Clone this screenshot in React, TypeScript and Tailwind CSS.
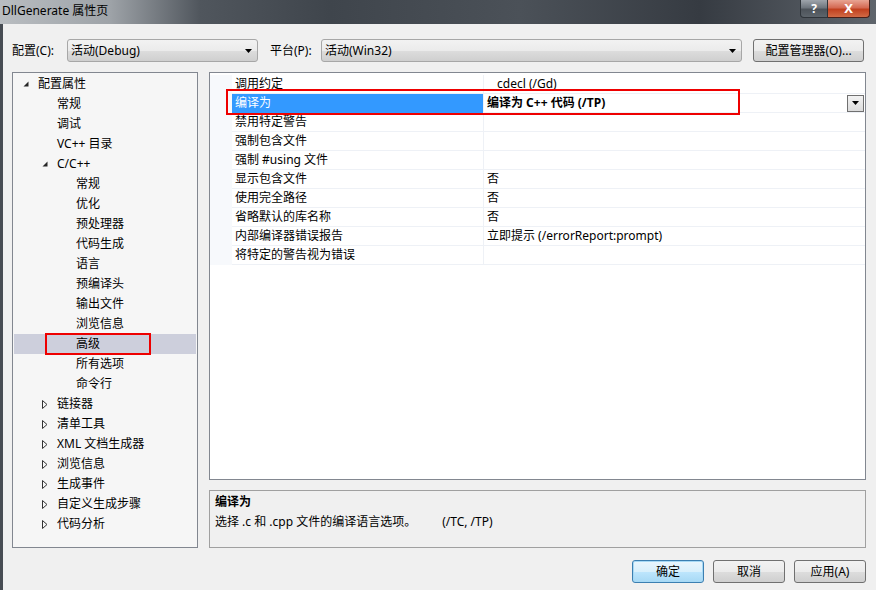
import React from "react";

type TreeNode = {
  label: string;
  level: number;
  arrow?: "open" | "closed";
  selected?: boolean;
};

const tree: TreeNode[] = [
  { label: "配置属性", level: 0, arrow: "open" },
  { label: "常规", level: 1 },
  { label: "调试", level: 1 },
  { label: "VC++ 目录", level: 1 },
  { label: "C/C++", level: 1, arrow: "open" },
  { label: "常规", level: 2 },
  { label: "优化", level: 2 },
  { label: "预处理器", level: 2 },
  { label: "代码生成", level: 2 },
  { label: "语言", level: 2 },
  { label: "预编译头", level: 2 },
  { label: "输出文件", level: 2 },
  { label: "浏览信息", level: 2 },
  { label: "高级", level: 2, selected: true },
  { label: "所有选项", level: 2 },
  { label: "命令行", level: 2 },
  { label: "链接器", level: 1, arrow: "closed" },
  { label: "清单工具", level: 1, arrow: "closed" },
  { label: "XML 文档生成器", level: 1, arrow: "closed" },
  { label: "浏览信息", level: 1, arrow: "closed" },
  { label: "生成事件", level: 1, arrow: "closed" },
  { label: "自定义生成步骤", level: 1, arrow: "closed" },
  { label: "代码分析", level: 1, arrow: "closed" },
];

const indent = ["pl-[9px]", "pl-[28px]", "pl-[47px]"];

const props: { name: string; value: string; indentValue?: boolean }[] = [
  { name: "调用约定", value: "cdecl (/Gd)", indentValue: true },
  { name: "编译为", value: "编译为 C++ 代码 (/TP)" },
  { name: "禁用特定警告", value: "" },
  { name: "强制包含文件", value: "" },
  { name: "强制 #using 文件", value: "" },
  { name: "显示包含文件", value: "否" },
  { name: "使用完全路径", value: "否" },
  { name: "省略默认的库名称", value: "否" },
  { name: "内部编译器错误报告", value: "立即提示 (/errorReport:prompt)" },
  { name: "将特定的警告视为错误", value: "" },
];

function DownTri() {
  return (
    <svg width="7" height="4" viewBox="0 0 7 4">
      <path d="M0 0 H7 L3.5 4 Z" fill="#000" />
    </svg>
  );
}

function TreeArrow({ kind }: { kind?: "open" | "closed" }) {
  if (kind === "open") {
    return (
      <svg width="6" height="6" viewBox="0 0 6 6">
        <path d="M5.5 0.5 V5.5 H0.5 Z" fill="#262626" />
      </svg>
    );
  }
  if (kind === "closed") {
    return (
      <svg width="6" height="9" viewBox="0 0 6 9">
        <path d="M0.5 0.5 L5 4.5 L0.5 8.5 Z" fill="none" stroke="#333" strokeWidth="1" />
      </svg>
    );
  }
  return null;
}

function Combo({ text, className }: { text: string; className: string }) {
  return (
    <div
      className={`${className} h-[23px] flex items-center justify-between pl-[3px] pr-[5px] rounded-[3px] border border-[#a7a7a7] bg-[linear-gradient(#f2f2f2,#ebebeb_50%,#dddddd_51%,#cfcfcf)]`}
    >
      <span>{text}</span>
      <DownTri />
    </div>
  );
}

function WinButton({ label, focused }: { label: string; focused?: boolean }) {
  return (
    <div
      className={`w-[72px] h-[23px] flex items-center justify-center rounded-[3px] border ${
        focused
          ? "border-[#3c7fb1] bg-[linear-gradient(#eaf6fd,#d9f0fc_50%,#bee6fd_51%,#a7d9f5)] shadow-[inset_0_0_0_1px_#a7d9f5]"
          : "border-[#707070] bg-[linear-gradient(#f2f2f2,#ebebeb_50%,#dddddd_51%,#cfcfcf)]"
      }`}
    >
      {label}
    </div>
  );
}

export default function App() {
  return (
    <div className="w-[876px] h-[590px] flex flex-col overflow-hidden font-['Noto_Sans','Noto_Sans_CJK_SC',sans-serif] text-[12px] leading-[16px] text-black">
      {/* Title bar */}
      <div className="h-[24px] flex items-start justify-between bg-[linear-gradient(to_right,#b9bdc1_0px,#9ea3a8_110px,#50565d_200px,#3f454c_330px,#4b5158_520px,#363b42_700px,#5f656c_876px)]">
        <div className="pl-[2px] pt-[3px] text-[12px] leading-[16px] text-black">DllGenerate 属性页</div>
        <div className="flex mr-[6px]">
          <div className="w-[28px] h-[18px] flex items-center justify-center border border-[#2f343a] border-t-0 rounded-bl-[4px] bg-[linear-gradient(#9ea4ab,#6f767e_45%,#4d535a_55%,#5d646b)] text-white font-bold text-[12px] leading-none">
            ?
          </div>
          <div className="w-[42px] h-[18px] flex items-center justify-center border border-[#4a1f18] border-t-0 border-l-0 rounded-br-[4px] bg-[linear-gradient(#e8a493,#d46a53_45%,#c1401f_55%,#d26a45)] text-white font-bold text-[13px] leading-none">
            X
          </div>
        </div>
      </div>

      {/* Body */}
      <div className="flex-1 flex bg-[#f0f0f0]">
        <div className="w-[3px] bg-[#474c53]" />
        <div className="flex-1 flex flex-col pl-[9px] pr-[10px]">
          {/* Top row */}
          <div className="mt-[15px] h-[23px] flex items-center">
            <span className="w-[55px]">配置(C):</span>
            <Combo text="活动(Debug)" className="w-[191px]" />
            <span className="ml-[12px] w-[51px]">平台(P):</span>
            <Combo text="活动(Win32)" className="w-[421px]" />
            <div className="ml-[11px] w-[111px] h-[23px] flex items-center justify-center rounded-[3px] border border-[#707070] bg-[linear-gradient(#f2f2f2,#ebebeb_50%,#dddddd_51%,#cfcfcf)]">
              配置管理器(O)...
            </div>
          </div>

          {/* Main */}
          <div className="mt-[10px] h-[476px] flex gap-[11px]">
            {/* Tree */}
            <div className="relative w-[186px] h-full border border-[#828790] bg-[#f6f6f6] pt-px">
              {tree.map((n, i) => (
                <div
                  key={i}
                  className={`mx-px h-[20px] flex items-center ${indent[n.level]} ${
                    n.selected ? "bg-[#cdcfdc]" : ""
                  }`}
                >
                  <span className="w-[15px] flex items-center">
                    <TreeArrow kind={n.arrow} />
                  </span>
                  <span>{n.label}</span>
                </div>
              ))}
              <div className="absolute left-[32px] top-[260px] w-[106px] h-[22px] border-2 border-[#ee0000]" />
            </div>

            {/* Right column */}
            <div className="flex-1 flex flex-col gap-[10px]">
              <div className="relative h-[408px] border border-[#828790] bg-white pt-[2px]">
                {props.map((p, i) => {
                  const sel = i === 1;
                  return (
                    <div key={i} className="h-[19px] flex">
                      <div className="w-[22px] bg-[#f7f9fc]" />
                      <div
                        className={`w-[251px] flex items-center pl-[3px] border-b ${
                          sel ? "bg-[#3399ff] text-white border-[#3399ff]" : "border-[#eef1f6]"
                        }`}
                      >
                        {p.name}
                      </div>
                      <div
                        className={`flex-1 flex items-center border-l border-b border-[#eef1f6] ${
                          p.indentValue ? "pl-[13px]" : "pl-[3px]"
                        } ${sel ? "font-bold justify-between pr-px" : ""}`}
                      >
                        <span>{p.value}</span>
                        {sel && (
                          <div className="w-[17px] h-[17px] flex items-center justify-center border border-[#707070] bg-[linear-gradient(#f2f2f2,#dcdcdc)]">
                            <DownTri />
                          </div>
                        )}
                      </div>
                    </div>
                  );
                })}
                <div className="absolute left-[16px] top-[16px] w-[514px] h-[26px] border-2 border-[#ee0000]" />
              </div>

              {/* Description */}
              <div className="h-[58px] border border-[#a0a0a0] bg-[#f0f0f0] pl-[5px] pt-[3px] flex flex-col gap-[4px]">
                <div className="font-bold">编译为</div>
                <div>
                  选择 .c 和 .cpp 文件的编译语言选项。
                  <span className="ml-[26px]">(/TC, /TP)</span>
                </div>
              </div>
            </div>
          </div>

          {/* Buttons */}
          <div className="mt-[12px] flex justify-end gap-[9px]">
            <WinButton label="确定" focused />
            <WinButton label="取消" />
            <WinButton label="应用(A)" />
          </div>
        </div>
      </div>
    </div>
  );
}
